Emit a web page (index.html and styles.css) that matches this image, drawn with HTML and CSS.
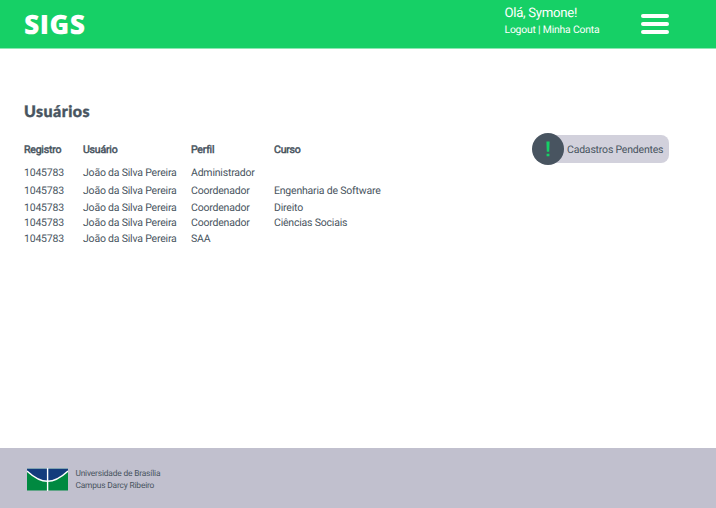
FILE: index.html
```html
<!DOCTYPE html>
<html lang="pt-BR">
<head>
<meta charset="utf-8">
<title>SIGS</title>
<link rel="stylesheet" href="styles.css">
</head>
<body>
<header class="topbar">
  <div class="brand">SIGS</div>
  <div class="account">
    <div class="hello">Olá, Symone!</div>
    <div class="links"><span>Logout</span> | <span>Minha Conta</span></div>
  </div>
  <div class="menu"><i></i><i></i><i></i></div>
</header>
<main class="content">
  <h1 class="title">Usuários</h1>
  <div class="columns">
    <div class="users">
      <b>Registro</b><b>Usuário</b><b>Perfil</b><b>Curso</b>
      <span>1045783</span><span>João da Silva Pereira</span><span>Administrador</span><span></span>
      <span>1045783</span><span>João da Silva Pereira</span><span>Coordenador</span><span>Engenharia de Software</span>
      <span>1045783</span><span>João da Silva Pereira</span><span>Coordenador</span><span>Direito</span>
      <span>1045783</span><span>João da Silva Pereira</span><span>Coordenador</span><span>Ciências Sociais</span>
      <span>1045783</span><span>João da Silva Pereira</span><span>SAA</span><span></span>
    </div>
    <div class="pending">
      <div class="alert">
        <svg width="6" height="18" viewBox="0 0 6 18"><path d="M1.4 1.5h3.2l-.4 10.3H1.8zM1.6 13.7h2.8v2.6H1.6z"/></svg>
      </div>
      <div class="pill">Cadastros Pendentes</div>
    </div>
  </div>
</main>
<footer class="footer">
  <svg class="logo" width="41" height="23" viewBox="0 0 41 23">
    <path class="green" d="M0 .5h41v22H0z"/>
    <path class="blue" d="M0 .5h41V3C34 9.5 28 13.3 20.5 13.3S7 9.5 0 3z"/>
    <path class="line" d="M0 3C7 9.5 13 13.3 20.5 13.3S34 9.5 41 3M20.6 0v23"/>
    <path class="edge" d="M0 .4h41"/>
  </svg>
  <div class="campus">Universidade de Brasília<br>Campus Darcy Ribeiro</div>
</footer>
</body>
</html>
```
FILE: styles.css
```css
* { box-sizing: border-box; }
body {
  margin: 0;
  height: 508px;
  display: flex;
  flex-direction: column;
  background: #fff;
  color: #485460;
  font-family: Roboto, sans-serif;
  font-size: 10.5px;
  letter-spacing: -.2px;
  text-rendering: geometricPrecision;
  overflow: hidden;
}
.topbar {
  height: 48px;
  flex: none;
  display: flex;
  padding-left: 24px;
  background: #16d066;
  box-shadow: 0 1px #8ae8b3;
  color: #fff;
}
.brand {
  width: 480.5px;
  font: 800 26.5px/48px "Open Sans", sans-serif;
  letter-spacing: .5px;
}
.account { width: 136.5px; padding-top: 5px; }
.hello { font-size: 13.2px; line-height: 17px; letter-spacing: -.3px; }
.links { font-size: 10.4px; line-height: 14px; padding-top: 1px; }
.menu { width: 28px; padding-top: 14px; }
.menu i {
  display: block;
  height: 3.6px;
  margin-bottom: 4.6px;
  border-radius: 2px;
  background: #fff;
}
.content { flex: 1; padding: 52px 47px 0 24px; }
.title {
  margin: 0;
  height: 33px;
  padding-top: 1px;
  font: 900 16px/22px Lato, sans-serif;
  letter-spacing: .45px;
  -webkit-text-stroke: .4px;
}
.columns { display: flex; justify-content: space-between; align-items: flex-start; }
.users {
  display: grid;
  grid-template-columns: 59px 108px 83px 130px;
  grid-template-rows: 23px 18px 16.5px 15.5px 16px 16px;
  padding-top: 8px;
  line-height: 17px;
  white-space: nowrap;
}
.users b { font-weight: 400; -webkit-text-stroke: .5px; }
.pending { display: flex; align-items: center; }
.alert {
  display: flex;
  align-items: center;
  justify-content: center;
  width: 32px;
  height: 32px;
  margin-top: -.5px;
  border-radius: 50%;
  background: #485460;
  fill: #16d066;
  z-index: 1;
}
.pill {
  width: 121px;
  height: 28px;
  margin-left: -16px;
  padding-left: 19px;
  border-radius: 0 8px 8px 0;
  background: #d2d1dc;
  line-height: 30px;
  white-space: nowrap;
}
.footer {
  height: 60px;
  flex: none;
  display: flex;
  align-items: center;
  gap: 7px;
  padding: 3px 0 0 27.4px;
  background: #c1c0ce;
}
.campus { font-size: 8.4px; line-height: 12.4px; letter-spacing: -.17px; padding-top: 1px; }
.green { fill: #008940; }
.blue { fill: #133c7c; }
.line { fill: none; stroke: #fff; stroke-width: 1.4; }
.edge { stroke: #dfe3ee; stroke-width: .5; }
```
